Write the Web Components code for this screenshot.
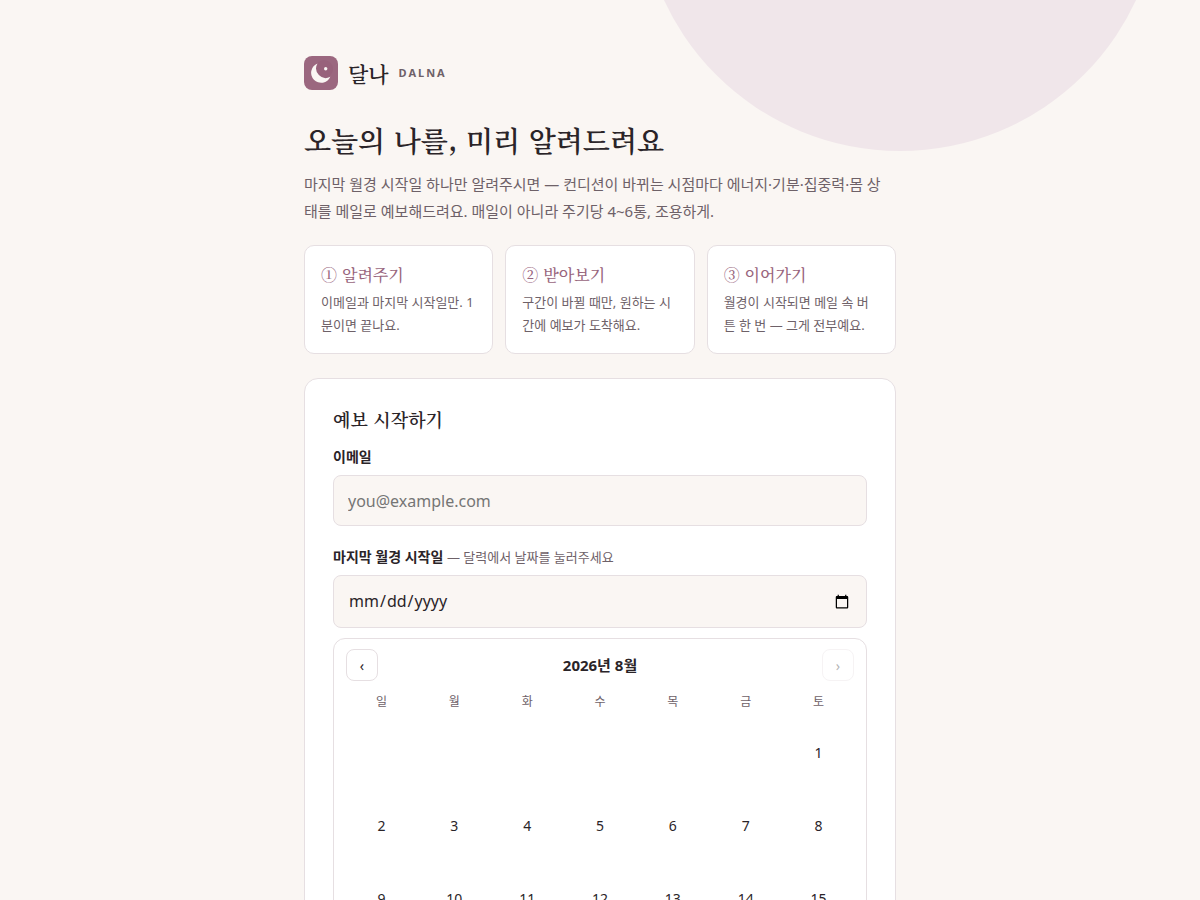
<!DOCTYPE html>
<html lang="ko">
<head>
<meta charset="utf-8">
<meta name="viewport" content="width=device-width, initial-scale=1">
<title>달나</title>
<style>
    :root {
        --bg: #faf6f3;
        --surface: #ffffff;
        --ink: #2a2428;
        --muted: #6e6168;
        --accent: #98647c;
        --line: #e6dfe2;
        --moon: #f0e6ea;
        --serif: "Noto Serif CJK KR", "Noto Sans CJK KR", serif;
    }
    body {
        margin: 0;
        background: var(--bg);
        color: var(--ink);
        font: 16px/27px "Noto Sans", "Noto Sans CJK KR", sans-serif;
    }
</style>
</head>
<body>
<dalna-page>
    <dalna-brand name="달나" latin="DALNA"></dalna-brand>
    <dalna-intro>
        <span slot="title">오늘의 나를, 미리 알려드려요</span>
        마지막 월경 시작일 하나만 알려주시면 — 컨디션이 바뀌는 시점마다 에너지·기분·집중력·몸 상태를 메일로 예보해드려요. 매일이 아니라 주기당 4~6통, 조용하게.
    </dalna-intro>
    <dalna-steps>
        <dalna-step heading="① 알려주기">이메일과 마지막 시작일만. 1분이면 끝나요.</dalna-step>
        <dalna-step heading="② 받아보기">구간이 바뀔 때만, 원하는 시간에 예보가 도착해요.</dalna-step>
        <dalna-step heading="③ 이어가기">월경이 시작되면 메일 속 버튼 한 번 — 그게 전부예요.</dalna-step>
    </dalna-steps>
    <dalna-form heading="예보 시작하기">
        <dalna-field type="email" label="이메일" placeholder="you@example.com"></dalna-field>
        <dalna-field type="date" label="마지막 월경 시작일" hint="— 달력에서 날짜를 눌러주세요">
            <dalna-calendar year="2026" month="8"></dalna-calendar>
        </dalna-field>
    </dalna-form>
</dalna-page>

<script>
class DalnaPage extends HTMLElement {
    connectedCallback() {
        this.attachShadow({ mode: "open" });
        this.shadowRoot.innerHTML = `
            <style>
                :host {
                    display: block;
                    position: relative;
                    overflow: hidden;
                }
                .moon {
                    position: absolute;
                    top: -369px;
                    left: calc(50% + 40px);
                    width: 520px;
                    height: 520px;
                    border-radius: 50%;
                    background: var(--moon);
                }
                main {
                    position: relative;
                    box-sizing: border-box;
                    max-width: 640px;
                    margin: 0 auto;
                    padding: 56px 24px;
                }
            </style>
            <div class="moon" aria-hidden="true"></div>
            <main><slot></slot></main>
        `;
    }
}

class DalnaBrand extends HTMLElement {
    connectedCallback() {
        this.attachShadow({ mode: "open" });
        this.shadowRoot.innerHTML = `
            <style>
                :host {
                    display: flex;
                    align-items: center;
                    gap: 10px;
                }
                svg { display: block; }
                .name { font: 600 21px/30px var(--serif); }
                .latin {
                    font-size: 11px;
                    line-height: 16px;
                    font-weight: 700;
                    letter-spacing: 2px;
                    color: var(--muted);
                }
            </style>
            <svg width="34" height="34" viewBox="0 0 34 34" aria-hidden="true">
                <rect width="34" height="34" rx="8" fill="#9b677f"/>
                <circle cx="20" cy="13" r="9" fill="#98627b"/>
                <path d="M13.500 7.500A10 10 0 1 0 26.300 20.800A9.600 9.600 0 0 1 13.500 7.500Z" fill="#faf6f3"/>
                <circle cx="21.700" cy="12.700" r="1.700" fill="#faf6f3"/>
            </svg>
            <span class="name">${this.getAttribute("name")}</span>
            <span class="latin">${this.getAttribute("latin")}</span>
        `;
    }
}

class DalnaIntro extends HTMLElement {
    connectedCallback() {
        this.attachShadow({ mode: "open" });
        this.shadowRoot.innerHTML = `
            <style>
                :host { display: block; margin: 30px 0 20px; }
                h1 {
                    margin: 0 0 10px;
                    font: 600 28px/41px var(--serif);
                }
                p {
                    margin: 0;
                    padding-right: 8px;
                    font-size: 15px;
                    color: var(--muted);
                }
            </style>
            <h1><slot name="title"></slot></h1>
            <p><slot></slot></p>
        `;
    }
}

class DalnaSteps extends HTMLElement {
    connectedCallback() {
        this.attachShadow({ mode: "open" });
        this.shadowRoot.innerHTML = `
            <style>
                :host {
                    display: grid;
                    grid-template-columns: repeat(3, 1fr);
                    gap: 12px;
                }
            </style>
            <slot></slot>
        `;
    }
}

class DalnaStep extends HTMLElement {
    connectedCallback() {
        this.attachShadow({ mode: "open" });
        this.shadowRoot.innerHTML = `
            <style>
                :host {
                    display: block;
                    padding: 16px;
                    border: 1px solid var(--line);
                    border-radius: 10px;
                    background: var(--surface);
                }
                h2 {
                    margin: 0 0 4px;
                    font: 500 16px/25px var(--serif);
                    color: var(--accent);
                }
                p {
                    margin: 0;
                    font-size: 13px;
                    line-height: 23px;
                    color: var(--muted);
                }
            </style>
            <h2>${this.getAttribute("heading")}</h2>
            <p><slot></slot></p>
        `;
    }
}

class DalnaForm extends HTMLElement {
    connectedCallback() {
        this.attachShadow({ mode: "open" });
        this.shadowRoot.innerHTML = `
            <style>
                :host {
                    display: block;
                    margin-top: 24px;
                    padding: 28px;
                    border: 1px solid var(--line);
                    border-radius: 14px;
                    background: var(--surface);
                }
                h2 {
                    margin: 0 0 12px;
                    font: 600 18px/25px var(--serif);
                }
                form {
                    display: grid;
                    gap: 18px;
                }
            </style>
            <h2>${this.getAttribute("heading")}</h2>
            <form><slot></slot></form>
        `;
    }
}

class DalnaField extends HTMLElement {
    connectedCallback() {
        const type = this.getAttribute("type");
        const hint = this.getAttribute("hint");
        this.attachShadow({ mode: "open" });
        this.shadowRoot.innerHTML = `
            <style>
                :host { display: block; }
                label {
                    display: block;
                    margin-bottom: 5px;
                    font-size: 14px;
                    line-height: 26px;
                    font-weight: 700;
                }
                small {
                    font-size: 13px;
                    font-weight: 400;
                    color: var(--muted);
                }
                input {
                    display: block;
                    box-sizing: border-box;
                    width: 100%;
                    height: 51px;
                    padding: 12px 14px;
                    border: 1px solid var(--line);
                    border-radius: 8px;
                    background: var(--bg);
                    color: var(--ink);
                    font: inherit;
                }
                input[type="date"] { height: 53px; }
                input:focus { outline: 2px solid var(--accent); }
            </style>
            <label for="control">${this.getAttribute("label")}${hint ? ` <small>${hint}</small>` : ""}</label>
            <input id="control" type="${type}" placeholder="${this.getAttribute("placeholder") || ""}">
            <slot></slot>
        `;
        if(type === "date") {
            const input = this.shadowRoot.querySelector("input");
            this.addEventListener("pick", (e) => input.value = e.detail);
        }
    }
}

class DalnaCalendar extends HTMLElement {
    connectedCallback() {
        this.year = Number(this.getAttribute("year"));
        this.month = Number(this.getAttribute("month"));
        this.lastMonth = this.year * 12 + this.month;
        this.attachShadow({ mode: "open" });
        this.shadowRoot.innerHTML = `
            <style>
                :host {
                    display: block;
                    margin-top: 10px;
                    padding: 10px 12px;
                    border: 1px solid var(--line);
                    border-radius: 12px;
                    background: var(--surface);
                }
                header {
                    display: flex;
                    align-items: center;
                    justify-content: space-between;
                    margin-bottom: 8px;
                }
                strong { font-size: 15px; }
                button {
                    padding: 0;
                    border: 0;
                    border-radius: 8px;
                    background: none;
                    color: inherit;
                    font: inherit;
                    font-size: 14px;
                    cursor: pointer;
                }
                header button {
                    width: 32px;
                    height: 32px;
                    border: 1px solid var(--line);
                    background: var(--surface);
                }
                header button:disabled { opacity: 0.35; cursor: default; }
                .grid {
                    display: grid;
                    grid-template-columns: repeat(7, 1fr);
                    gap: 2px;
                }
                .grid span {
                    font-size: 12px;
                    line-height: 26px;
                    text-align: center;
                    color: var(--muted);
                }
                .grid button { aspect-ratio: 1; }
                .grid button:hover { background: var(--moon); }
            </style>
            <header>
                <button type="button" id="prev" aria-label="이전 달">‹</button>
                <strong></strong>
                <button type="button" id="next" aria-label="다음 달">›</button>
            </header>
            <div class="grid"></div>
        `;
        this.cacheDom();
        this.attachEvents();
        this.render();
    }

    cacheDom() {
        this.dom = {
            title: this.shadowRoot.querySelector("strong"),
            grid: this.shadowRoot.querySelector(".grid"),
            prev: this.shadowRoot.querySelector("#prev"),
            next: this.shadowRoot.querySelector("#next")
        };
    }

    attachEvents() {
        this.dom.prev.addEventListener("click", () => this.move(-1));
        this.dom.next.addEventListener("click", () => this.move(1));
        this.dom.grid.addEventListener("click", (e) => {
            const day = e.target.dataset.day;
            if(!day) return;
            const value = `${this.year}-${String(this.month).padStart(2, "0")}-${day.padStart(2, "0")}`;
            this.dispatchEvent(new CustomEvent("pick", { detail: value, bubbles: true }));
        });
    }

    move(step) {
        const date = new Date(this.year, this.month - 1 + step, 1);
        this.year = date.getFullYear();
        this.month = date.getMonth() + 1;
        this.render();
    }

    render() {
        const first = new Date(this.year, this.month - 1, 1).getDay();
        const count = new Date(this.year, this.month, 0).getDate();
        let html = [..."일월화수목금토"].map((name) => `<span>${name}</span>`).join("");
        for(let day = 1; day <= count; day++) {
            const start = day === 1 ? ` style="grid-column-start: ${first + 1}"` : "";
            html += `<button type="button" data-day="${day}"${start}>${day}</button>`;
        }
        this.dom.title.textContent = `${this.year}년 ${this.month}월`;
        this.dom.grid.innerHTML = html;
        // future months can't be picked
        this.dom.next.disabled = this.year * 12 + this.month >= this.lastMonth;
    }
}

customElements.define("dalna-page", DalnaPage);
customElements.define("dalna-brand", DalnaBrand);
customElements.define("dalna-intro", DalnaIntro);
customElements.define("dalna-steps", DalnaSteps);
customElements.define("dalna-step", DalnaStep);
customElements.define("dalna-form", DalnaForm);
customElements.define("dalna-field", DalnaField);
customElements.define("dalna-calendar", DalnaCalendar);
</script>
</body>
</html>
